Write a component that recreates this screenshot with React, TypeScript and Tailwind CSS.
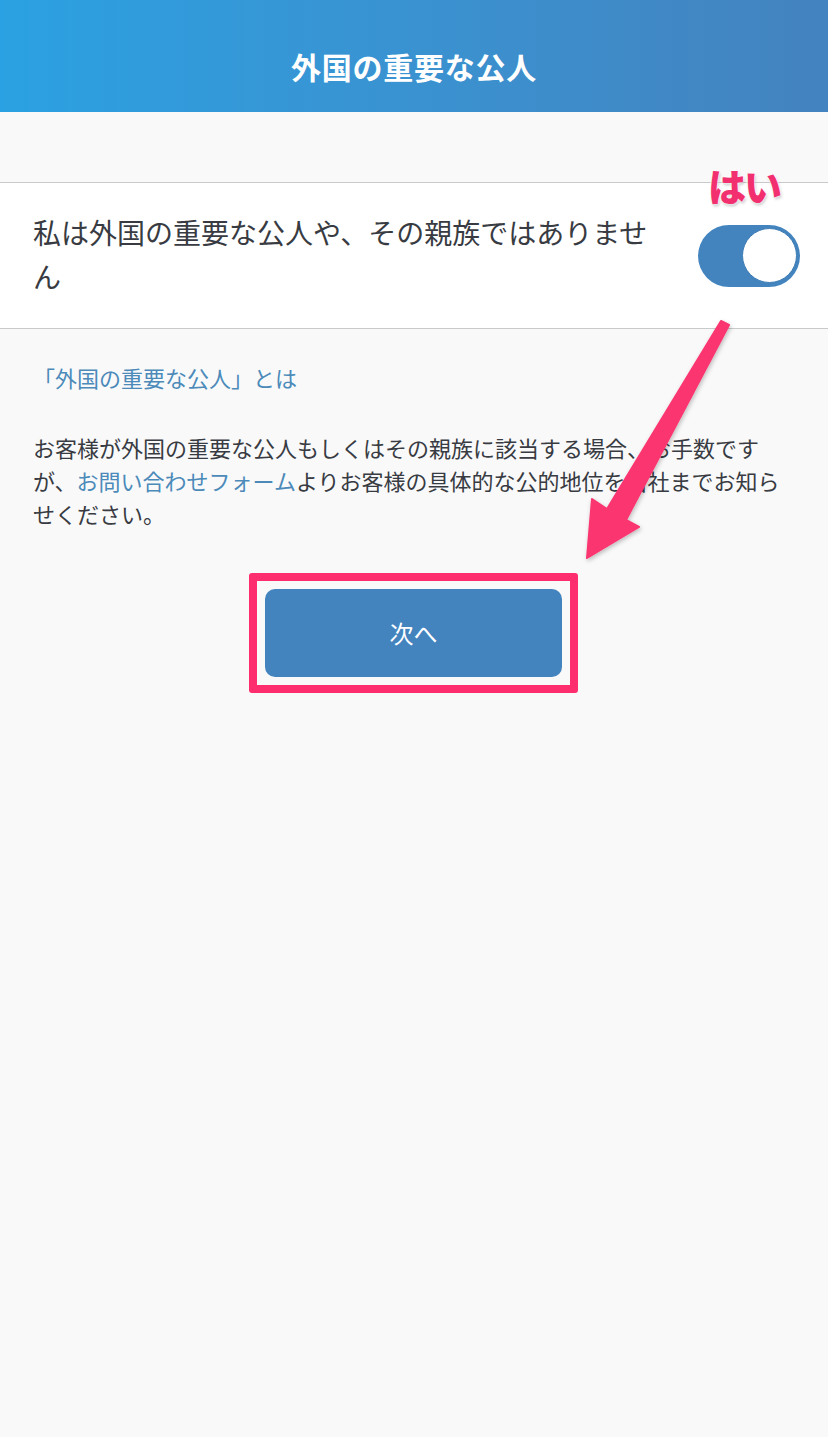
const jp = { fontFamily: '"Noto Sans CJK JP", "Noto Sans", sans-serif' }

function Toggle() {
  return (
    <div className="w-[102px] h-[62px] rounded-full bg-[#4384bf] flex items-center justify-end pr-[3px]">
      <div className="w-[55px] h-[55px] rounded-full bg-white border border-[#3f7db5]" />
    </div>
  )
}

function Arrow() {
  return (
    <svg
      className="absolute left-0 top-0 pointer-events-none"
      width="828"
      height="1437"
      viewBox="0 0 828 1437"
    >
      <defs>
        <filter id="sh" x="-20%" y="-20%" width="140%" height="140%">
          <feDropShadow dx="1" dy="2" stdDeviation="2" floodColor="#000" floodOpacity="0.25" />
        </filter>
      </defs>
      <polygon
        points="721,321 729,325 626,520 639,527 587,558 592,499 607,509"
        fill="#fb3570"
        stroke="#fb3570"
        strokeWidth="2"
        strokeLinejoin="round"
        filter="url(#sh)"
      />
    </svg>
  )
}

export default function App() {
  return (
    <div className="relative w-[828px] min-h-[1437px] bg-[#f9f9fa]" style={jp}>
      <header className="h-[112px] pt-[20px] bg-gradient-to-r from-[#2aa1e2] to-[#4383bf] flex items-center justify-center">
        <h1 className="text-white text-[30px] font-bold tracking-wide">外国の重要な公人</h1>
      </header>

      <div className="h-[70px]" />

      <div className="relative bg-white border-y border-[#c9c9cb] h-[147px] flex items-center justify-between pl-[33px] pr-[28px]">
        <p className="w-[640px] text-[28px] leading-[44px] text-[#383b42] -mt-[3px]">
          私は外国の重要な公人や、その親族ではありません
        </p>
        <Toggle />
        <span
          className="absolute left-[708px] top-[-17px] text-[38px] font-black text-[#f2306f] leading-none tracking-[-2px]"
          style={{ textShadow: '0 0 2px #fff, 0 0 3px #fff, 1px 2px 3px rgba(0,0,0,0.25)' }}
        >
          はい
        </span>
      </div>

      <div className="px-[33px] pt-[32px]">
        <a className="block text-[22px] leading-[32px] text-[#4b8ab9]">「外国の重要な公人」とは</a>
        <p className="mt-[38px] text-[22px] leading-[33px] text-[#383b42]">
          お客様が外国の重要な公人もしくはその親族に該当する場合、お手数ですが、
          <span className="text-[#4b8ab9]">お問い合わせフォーム</span>
          よりお客様の具体的な公的地位を当社までお知らせください。
        </p>
      </div>

      <div className="flex justify-center pt-[43px] pr-[1px]">
        <div className="border-[8px] border-[#fe2d6e] rounded-[3px] p-[8px]">
          <button className="w-[297px] h-[88px] rounded-[10px] bg-[#4384bf] text-white text-[24px]">
            次へ
          </button>
        </div>
      </div>

      <Arrow />
    </div>
  )
}
